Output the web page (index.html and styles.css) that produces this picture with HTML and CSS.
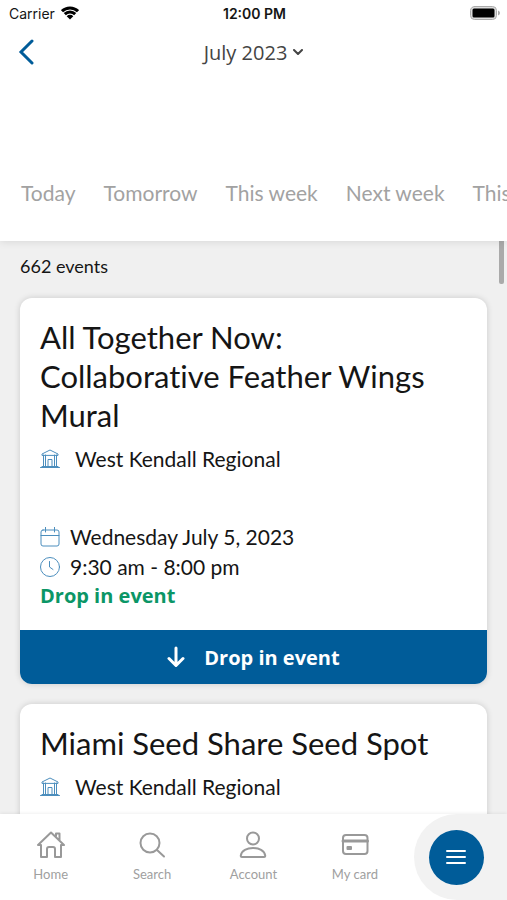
FILE: index.html
```html
<!DOCTYPE html>
<html lang="en">
<head>
<meta charset="utf-8">
<meta name="viewport" content="width=device-width, initial-scale=1">
<title>Events</title>
<link rel="stylesheet" href="styles.css">
</head>
<body>
<svg class="defs" aria-hidden="true">
  <symbol id="library" viewBox="0 0 20 20">
    <path d="M2 6V5l8-4 8 4v1zM3.500 6v11.500M16.500 6v11.500M5.500 6v11.500M14.500 6v11.500M.5 18.500h19M2 17.500h16M8 17.500v-7h4v7"/>
  </symbol>
</svg>
<div class="app">
  <header class="top">
    <div class="status">
      <div class="carrier">Carrier
        <svg class="wifi" viewBox="0 0 18 14" aria-hidden="true"><path d="M1 5.200a11.500 11.500 0 0 1 16 0M3.800 8.100a7.400 7.400 0 0 1 10.400 0" /><path class="solid" d="M9 13.500 5.700 10.200a4.700 4.700 0 0 1 6.600 0z"/></svg>
      </div>
      <div class="clock">12:00 PM</div>
      <svg class="battery" viewBox="0 0 30 14" aria-hidden="true"><rect x=".5" y=".5" width="26" height="13" rx="4" class="shell"/><rect x="2.500" y="2.500" width="22" height="9" rx="1.500"/><path class="tip" d="M28 4.500q2 .8 2 2.500t-2 2.500z"/></svg>
    </div>
    <div class="titlebar">
      <button class="back" aria-label="Back"><svg viewBox="0 0 16 26" aria-hidden="true"><path d="M14 2 3 13l11 11"/></svg></button>
      <button class="month">July 2023<svg viewBox="0 0 10 6" aria-hidden="true"><path d="M1 1l4 4 4-4"/></svg></button>
    </div>
    <nav class="ranges" aria-label="Date range">
      <a href="#">Today</a><a href="#">Tomorrow</a><a href="#">This week</a><a href="#">Next week</a><a href="#">This</a>
    </nav>
  </header>
  <main class="list">
    <p class="count">662 events</p>
    <article class="card">
      <div class="body">
        <h2>All Together Now: Collaborative Feather Wings Mural</h2>
        <p class="place"><svg class="icon" aria-hidden="true"><use href="#library"/></svg>West Kendall Regional</p>
        <div class="when">
          <p><svg class="icon" viewBox="0 0 20 20" aria-hidden="true"><rect x="1" y="3" width="18" height="16" rx="2"/><path d="M1 8.500h18M5.500 0v5M14.500 0v5"/></svg>Wednesday July 5, 2023</p>
          <p><svg class="icon" viewBox="0 0 20 20" aria-hidden="true"><circle cx="10" cy="10" r="9.500"/><path d="M9.500 4.500v5.500l3.500 2.500"/></svg>9:30 am - 8:00 pm</p>
          <p class="kind">Drop in event</p>
        </div>
      </div>
      <button class="action"><svg viewBox="0 0 18 22" aria-hidden="true"><path d="M9 2v17M2 12.500l7 7 7-7"/></svg>Drop in event</button>
    </article>
    <article class="card">
      <div class="body">
        <h2>Miami Seed Share Seed Spot</h2>
        <p class="place"><svg class="icon" aria-hidden="true"><use href="#library"/></svg>West Kendall Regional</p>
      </div>
    </article>
    <div class="thumb"></div>
  </main>
  <nav class="tabs" aria-label="Main">
    <a href="#"><svg viewBox="0 0 28 28" aria-hidden="true"><path d="M1 14 14 1.500 27 14h-3v12h-6v-8q0-2-2-2h-4q-2 0-2 2v8H4V14zM19 5V2.500h3.500v7"/></svg>Home</a>
    <a href="#"><svg viewBox="0 0 28 28" aria-hidden="true"><circle cx="12" cy="12" r="9.500"/><path d="m19 19 7 6.500"/></svg>Search</a>
    <a href="#"><svg viewBox="0 0 28 28" aria-hidden="true"><circle cx="14" cy="7.500" r="6"/><path d="M3 26c-1 0-1.300-.6-1.200-1.500C2.500 19.500 8 17 14 17s11.500 2.500 12.200 7.500c.1.900-.2 1.500-1.200 1.500z"/></svg>Account</a>
    <a href="#"><svg viewBox="0 0 28 28" aria-hidden="true"><rect x="2" y="4" width="24.500" height="19" rx="3"/><path class="band" d="M2 10h24.500"/><rect class="chip" x="5.500" y="15" width="5.500" height="4" rx="1"/></svg>My card</a>
    <div class="dock"><button aria-label="Menu"><svg viewBox="0 0 20 16" aria-hidden="true"><path d="M1 2h18M1 8h18M1 14h18"/></svg></button></div>
  </nav>
</div>
</body>
</html>
```
FILE: styles.css
```css
* { box-sizing: border-box; margin: 0; padding: 0; }
body { font-family: Lato, "Open Sans", sans-serif; font-variant-ligatures: none; color: #151515; background: #f0f0f0; }
button { font: inherit; border: 0; background: none; }
a { text-decoration: none; color: inherit; }
svg { fill: none; stroke: currentColor; stroke-linecap: round; stroke-linejoin: round; flex: none; }
.defs { position: absolute; width: 0; height: 0; }
.app { height: 100vh; display: flex; flex-direction: column; overflow: hidden; }

.top { background: #fff; box-shadow: 0 1px 8px rgba(0, 0, 0, .1); position: relative; z-index: 1; padding-bottom: 28px; }
.status { display: grid; grid-template-columns: 1fr auto 1fr; align-items: center; height: 26px; padding: 0 7px 0 9px; font: 14px Inter, sans-serif; }
.carrier { display: flex; align-items: center; gap: 6px; }
.wifi { width: 18px; height: 14px; stroke: #000; stroke-width: 3; stroke-linecap: butt; }
.wifi .solid { fill: #000; stroke: none; }
.clock { font-weight: 600; }
.battery { width: 30px; height: 14px; justify-self: end; fill: #000; stroke: none; }
.battery .shell { fill: #ddd; stroke: #aaa; }
.battery .tip { fill: #aaa; }

.titlebar { display: grid; grid-template-columns: 1fr auto 1fr; align-items: center; height: 52px; padding: 0 18px; color: #444; }
.back { justify-self: start; height: 26px; color: #005c99; }
.back svg { width: 16px; height: 26px; stroke-width: 3; stroke-linejoin: miter; }
.month { display: flex; align-items: center; gap: 6px; font: 20px "Open Sans", sans-serif; color: #444; }
.month svg { width: 10px; height: 6px; stroke-width: 2; }
.ranges { display: flex; gap: 28px; margin-top: 94px; padding-left: 21px; overflow: hidden; white-space: nowrap; font-size: 21px; line-height: 41px; color: #a2a2a2; }

.list { flex: 1; min-height: 0; overflow: hidden; position: relative; padding: 0 20px; }
.count { font-size: 18px; line-height: 25px; padding: 13px 0 19px; }
.thumb { position: absolute; top: 0; right: 3px; width: 5px; height: 43px; background: #aaa; border-radius: 0 0 2px 2px; }
.card { background: #fff; border-radius: 12px; overflow: hidden; box-shadow: 0 0 6px rgba(0, 0, 0, .16); margin-bottom: 20px; }
.body { padding: 20px; }
.body:last-child { padding-bottom: 48px; }
.card h2 { font-weight: 400; font-size: 31px; line-height: 39px; }
.place, .when p { display: flex; align-items: center; font-size: 21px; }
.place { gap: 15px; line-height: 30px; margin-top: 9px; }
.icon { width: 20px; height: 20px; color: #4c8ebd; }
.when { margin-top: 48px; }
.when p { gap: 10px; line-height: 30px; }
.when .kind { color: #0b9666; font: 700 20px/28px "Open Sans", sans-serif; }
.action { width: 100%; height: 54px; display: flex; align-items: center; justify-content: center; gap: 19px; background: #005c99; color: #fff; font: 700 20px "Open Sans", sans-serif; }
.action svg { width: 18px; height: 22px; stroke-width: 3; }

.tabs { display: grid; grid-template-columns: repeat(5, 1fr); height: 86px; background: #fff; position: relative; z-index: 1; box-shadow: 0 -1px 3px rgba(0, 0, 0, .06); font-size: 13px; line-height: 18px; color: #a0a0a0; }
.tabs a { display: flex; flex-direction: column; align-items: center; gap: 6px; padding-top: 17px; }
.tabs a svg { width: 28px; height: 28px; stroke: #999; stroke-width: 2; }
.tabs .band { stroke-width: 3; }
.tabs .chip { fill: #999; stroke: none; }
.dock { margin-left: 8px; padding-left: 15px; display: flex; align-items: center; background: #f2f2f2; border-radius: 43px 0 0 43px; }
.dock button { width: 55px; height: 55px; border-radius: 50%; background: #005c99; color: #fff; display: flex; align-items: center; justify-content: center; }
.dock svg { width: 20px; height: 16px; stroke-width: 2; }
```
